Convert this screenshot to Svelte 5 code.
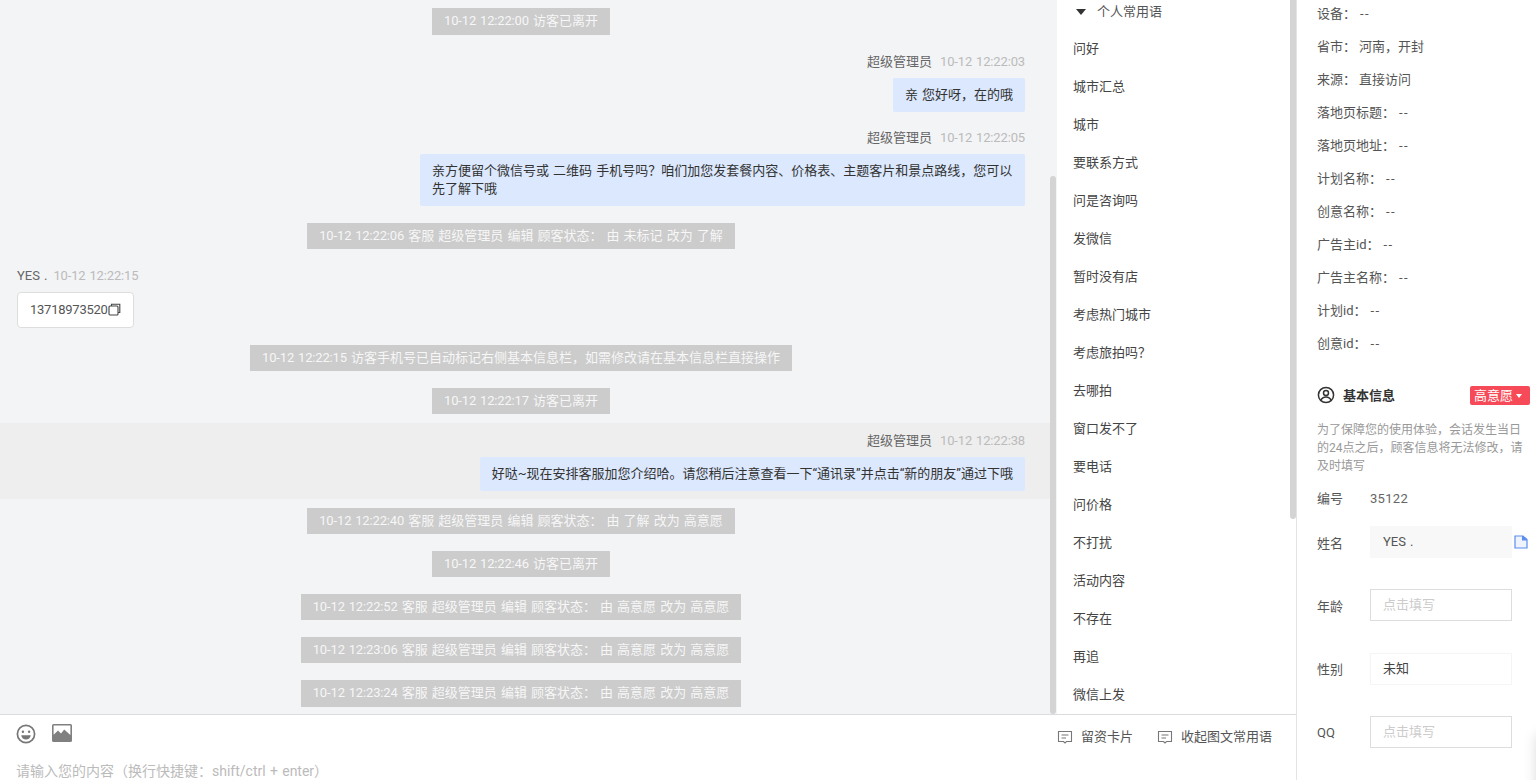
<script lang="ts">
  type Row =
    | { kind: 'sys'; text: string }
    | { kind: 'out'; time: string; text: string; hl?: boolean }
    | { kind: 'card'; name: string; time: string; phone: string };

  const rows: Row[] = [
    { kind: 'sys', text: '10-12 12:22:00 访客已离开' },
    { kind: 'out', time: '10-12 12:22:03', text: '亲 您好呀，在的哦' },
    { kind: 'out', time: '10-12 12:22:05', text: '亲方便留个微信号或 二维码 手机号吗？咱们加您发套餐内容、价格表、主题客片和景点路线，您可以先了解下哦' },
    { kind: 'sys', text: '10-12 12:22:06 客服 超级管理员 编辑 顾客状态： 由 未标记 改为 了解' },
    { kind: 'card', name: 'YES .', time: '10-12 12:22:15', phone: '13718973520' },
    { kind: 'sys', text: '10-12 12:22:15 访客手机号已自动标记右侧基本信息栏，如需修改请在基本信息栏直接操作' },
    { kind: 'sys', text: '10-12 12:22:17 访客已离开' },
    { kind: 'out', time: '10-12 12:22:38', text: '好哒~现在安排客服加您介绍哈。请您稍后注意查看一下“通讯录”并点击“新的朋友”通过下哦', hl: true },
    { kind: 'sys', text: '10-12 12:22:40 客服 超级管理员 编辑 顾客状态： 由 了解 改为 高意愿' },
    { kind: 'sys', text: '10-12 12:22:46 访客已离开' },
    { kind: 'sys', text: '10-12 12:22:52 客服 超级管理员 编辑 顾客状态： 由 高意愿 改为 高意愿' },
    { kind: 'sys', text: '10-12 12:23:06 客服 超级管理员 编辑 顾客状态： 由 高意愿 改为 高意愿' },
    { kind: 'sys', text: '10-12 12:23:24 客服 超级管理员 编辑 顾客状态： 由 高意愿 改为 高意愿' },
  ];

  const phrases = ['问好', '城市汇总', '城市', '要联系方式', '问是咨询吗', '发微信', '暂时没有店', '考虑热门城市', '考虑旅拍吗？', '去哪拍', '窗口发不了', '要电话', '问价格', '不打扰', '活动内容', '不存在', '再追', '微信上发'];

  const visitor = [
    ['设备', '--'], ['省市', '河南，开封'], ['来源', '直接访问'], ['落地页标题', '--'], ['落地页地址', '--'],
    ['计划名称', '--'], ['创意名称', '--'], ['广告主id', '--'], ['广告主名称', '--'], ['计划id', '--'], ['创意id', '--'],
  ];
</script>

{#snippet msgIcon()}
  <svg class="msg-icon" viewBox="0 0 16 16" width="16" height="16" fill="none" stroke="#777" stroke-width="1.1">
    <path d="M1.5 2.5h13v10H9.5L8 14l-1.5-1.5h-5z" />
    <path d="M4.5 6h7M4.5 9h4.5" />
  </svg>
{/snippet}

<div class="page">
  <div class="left">
    <div class="top">
      <div class="chat">
        {#each rows as row}
          {#if row.kind === 'sys'}
            <div class="sys-row"><span class="pill"><span class="stamp">{row.text.slice(0, 14)}</span>{row.text.slice(14)}</span></div>
          {:else if row.kind === 'out'}
            <div class="out-row" class:hl={row.hl}>
              <div class="meta"><span class="name">超级管理员</span><span class="time stamp">{row.time}</span></div>
              <div class="bubble">{row.text}</div>
            </div>
          {:else}
            <div class="in-row">
              <div class="meta"><span class="name">{row.name}</span><span class="time stamp">{row.time}</span></div>
              <div class="phone-card">
                <span class="phone">{row.phone}</span><svg viewBox="0 0 13 13" width="13" height="13" fill="none" stroke="#444" stroke-width="1.1">
                  <rect x="1" y="3" width="9" height="9" rx="1" />
                  <path d="M3.5 3V1.2h8.3v8.3H10" />
                </svg>
              </div>
            </div>
          {/if}
        {/each}
        <div class="thumb chat-thumb"></div>
      </div>

      <div class="phrases">
        <div class="group"><span class="caret"></span>个人常用语</div>
        {#each phrases as p}
          <div class="phrase">{p}</div>
        {/each}
        <div class="thumb side-thumb"></div>
      </div>
    </div>

    <div class="composer">
      <div class="tools">
        <div class="tool-left">
          <svg viewBox="0 0 20 20" width="20" height="20" fill="none" stroke="#777" stroke-width="1.7">
            <circle cx="10" cy="10" r="8.6" />
            <circle cx="6.9" cy="7.7" r="1.2" fill="#777" stroke="none" />
            <circle cx="13.1" cy="7.7" r="1.2" fill="#777" stroke="none" />
            <path d="M5.2 11.3h9.6c-.4 2.8-2.4 4.3-4.8 4.3s-4.4-1.5-4.8-4.3z" fill="#777" stroke="none" />
          </svg>
          <svg class="pic" viewBox="0 0 20 18" width="20" height="18">
            <path d="M1.5 0h17A1.5 1.5 0 0 1 20 1.5v15a1.5 1.5 0 0 1-1.5 1.5h-17A1.5 1.5 0 0 1 0 16.5v-15A1.5 1.5 0 0 1 1.5 0zM1.6 1.6v9.2L6 6.4l3 3 3.2-4 6.2 5.6V1.6z" fill="#808080" fill-rule="evenodd" />
          </svg>
        </div>
        <div class="tool-right">
          <div class="tool-btn">{@render msgIcon()}留资卡片</div>
          <div class="tool-btn">{@render msgIcon()}收起图文常用语</div>
        </div>
      </div>
      <div class="placeholder">请输入您的内容（换行快捷键：shift/ctrl + enter）</div>
    </div>
  </div>

  <div class="right">
    <div class="visitor">
      {#each visitor as [k, v]}
        <div class="kv">{k}：<span class="val" class:dash={v === '--'}>{v}</span></div>
      {/each}
    </div>

    <div class="head">
      <svg viewBox="0 0 18 18" width="18" height="18" fill="none" stroke="#333" stroke-width="1.5">
        <circle cx="9" cy="9" r="7.6" />
        <circle cx="9" cy="7" r="2.5" />
        <path d="M4 14.2c1-2.4 2.8-3.2 5-3.2s4 .8 5 3.2" />
      </svg>
      <span class="head-title">基本信息</span>
      <span class="badge">高意愿<i></i></span>
    </div>
    <p class="note">为了保障您的使用体验，会话发生当日的24点之后，顾客信息将无法修改，请及时填写</p>

    <div class="id-row"><label>编号</label><span>35122</span></div>
    <div class="field">
      <label>姓名</label>
      <div class="input filled">YES .</div>
      <svg class="doc" viewBox="0 0 14 14" width="14" height="14" fill="#eef3fd" stroke="#5b8def" stroke-width="1.2">
        <path d="M1 1h8l4 3.6V13H1z" />
        <path d="M8.6 1v4H13" fill="#5b8def" />
      </svg>
    </div>
    <div class="field"><label>年龄</label><div class="input empty">点击填写</div></div>
    <div class="field"><label>性别</label><div class="input plain">未知</div></div>
    <div class="field"><label>QQ</label><div class="input empty">点击填写</div></div>
    <div class="edge-shadow"></div>
  </div>
</div>

<style>
  :global(body) {
    margin: 0;
    background: #fff;
  }
  .page {
    display: flex;
    height: 780px;
    overflow: hidden;
    font-family: Roboto, "Noto Sans CJK SC", sans-serif;
    font-size: 13px;
    word-spacing: 0.85px;
    color: #333;
  }
  .left {
    width: 1296px;
    flex: none;
    display: flex;
    flex-direction: column;
    border-right: 1px solid #e4e4e4;
  }
  .top {
    height: 714px;
    display: flex;
    overflow: hidden;
  }
  .chat {
    width: 1057px;
    flex: none;
    background: #f3f4f6;
    position: relative;
    overflow: hidden;
  }
  .thumb {
    position: absolute;
    right: 0;
    width: 6px;
    background: #d4d4d4;
    border-radius: 3px;
  }
  .chat-thumb { top: 176px; bottom: 0; right: 1px; }
  .side-thumb { top: -4px; height: 523px; }

  .stamp { letter-spacing: -0.15px; }
  .sys-row {
    padding: 8.4px 32px 8.6px 17px;
    display: flex;
    justify-content: center;
  }
  .pill {
    height: 26.2px;
    line-height: 26px;
    padding: 0 12px;
    background: #ccc;
    color: rgba(255, 255, 255, 0.85);
    white-space: nowrap;
  }
  .out-row {
    width: 1050px;
    box-sizing: border-box;
    padding: 10.5px 25px 8px 17px;
    display: flex;
    flex-direction: column;
    align-items: flex-end;
  }
  .out-row.hl { background: #eeeeee; }
  .in-row {
    padding: 10.5px 25px 8.6px 17px;
  }
  .meta {
    height: 16px;
    line-height: 16px;
    margin-bottom: 8px;
    white-space: nowrap;
  }
  .name { color: #666; }
  .time { color: #bbb; margin-left: 8px; }
  .in-row .time { margin-left: 6px; }
  .bubble {
    max-width: 581px;
    padding: 8px 12px;
    line-height: 18px;
    background: #dbe8fd;
    border-radius: 2px;
    color: #333;
  }
  .phone-card {
    display: inline-flex;
    align-items: center;
    box-sizing: border-box;
    height: 36px;
    width: 117px;
    padding-left: 12px;
    background: #fff;
    border: 1px solid #ddd;
    border-radius: 4px;
    color: #555;
  }
  .phone { letter-spacing: -0.25px; }

  .phrases {
    flex: 1;
    position: relative;
    background: #fff;
    padding-left: 16px;
  }
  .group {
    height: 30px;
    padding-top: 4px;
    box-sizing: border-box;
    line-height: 16px;
    color: #555;
    display: flex;
    align-items: flex-start;
  }
  .caret {
    width: 0;
    height: 0;
    margin: 5px 11px 0 3px;
    border-left: 5px solid transparent;
    border-right: 5px solid transparent;
    border-top: 6px solid #333;
  }
  .phrase {
    height: 38px;
    line-height: 38px;
    color: #444;
  }

  .composer {
    flex: 1;
    border-top: 1px solid #dcdcdc;
    background: #fff;
    padding: 0 24px 0 16px;
  }
  .tools {
    display: flex;
    justify-content: space-between;
    height: 47px;
  }
  .tool-left {
    display: flex;
    align-items: flex-start;
    gap: 16px;
    padding-top: 9px;
  }
  .tool-right {
    display: flex;
    gap: 24px;
    padding-top: 14px;
    color: #555;
  }
  .tool-btn {
    display: flex;
    align-items: flex-start;
    gap: 8px;
    line-height: 16px;
  }
  .placeholder {
    font-size: 14px;
    color: #bbb;
    line-height: 18px;
    white-space: nowrap;
  }

  .right {
    flex: 1;
    position: relative;
    padding: 0 0 0 20px;
    color: #555;
  }
  .visitor { margin-top: -3px; }
  .kv {
    height: 33px;
    line-height: 33px;
    color: #555;
  }
  .val { margin-left: 3px; }
  .val.dash { margin-left: 4px; letter-spacing: 1.5px; }
  .head {
    margin-top: 26px;
    height: 19px;
    display: flex;
    align-items: center;
    width: 213px;
  }
  .head svg { margin-bottom: 2px; }
  .head-title {
    margin: 0 0 2px 8px;
    font-weight: 700;
    color: #333;
    flex: 1;
  }
  .badge {
    width: 60px;
    height: 19px;
    line-height: 19px;
    box-sizing: border-box;
    padding-left: 4px;
    background: #f74a58;
    color: #fff;
    border-radius: 2px;
    display: flex;
    align-items: center;
  }
  .badge i {
    margin-left: 3px;
    border-left: 3.5px solid transparent;
    border-right: 3.5px solid transparent;
    border-top: 4px solid #fff;
  }
  .note {
    margin: 16px 10px 0 0;
    font-size: 12px;
    line-height: 18px;
    color: #999;
  }
  .id-row {
    margin-top: 14px;
    display: flex;
    line-height: 20px;
  }
  label {
    width: 53px;
    flex: none;
    color: #555;
  }
  .id-row span { color: #666; letter-spacing: 0.3px; }
  .field {
    display: flex;
    align-items: center;
    height: 32px;
    margin-bottom: 31.4px;
  }
  .id-row + .field { margin-top: 17px; }
  .input {
    width: 142px;
    height: 32px;
    box-sizing: border-box;
    padding-left: 12px;
    line-height: 30px;
    border: 1px solid transparent;
  }
  .filled { background: #f8f8f8; color: #555; }
  .empty { border-color: #ddd; color: #ccc; }
  .plain { border-color: #f5f5f5; color: #444; }
  .doc { margin-left: 2px; }
  .edge-shadow {
    position: absolute;
    left: 240px;
    top: 735px;
    width: 30px;
    height: 80px;
    box-shadow: 0 0 14px rgba(0, 0, 0, 0.16);
  }
</style>
